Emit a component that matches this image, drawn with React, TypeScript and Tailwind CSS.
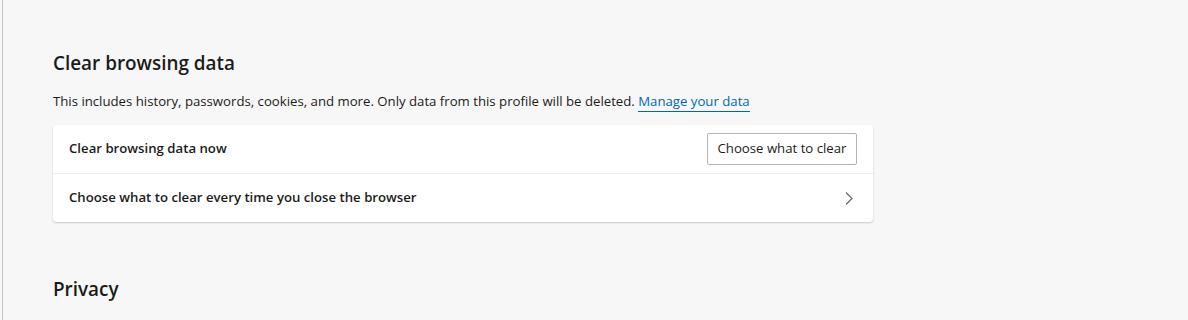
const font = { fontFamily: '"Segoe UI", "Open Sans", sans-serif' };

export default function App() {
  return (
    <div
      className="flex h-[320px] w-[1188px] overflow-hidden bg-[#f7f7f7] text-[#1b1b1b]"
      style={font}
    >
      <div className="w-[2px] shrink-0" />
      <div className="w-px shrink-0 bg-[#c4c4c4]" />
      <div className="flex w-[870px] flex-col pl-[50px] pt-[50px]">
        <h2 className="text-[18.9px] font-semibold leading-[26px]">Clear browsing data</h2>
        <p className="mt-[15px] text-[13.2px] leading-[20px]">
          This includes history, passwords, cookies, and more. Only data from this profile will be
          deleted.{" "}
          <a href="#" className="border-b border-[#0067b8] pb-[1px] text-[#0067b8]">
            Manage your data
          </a>
        </p>
        <div className="mt-[14px] w-[820px] rounded-[4px] bg-white shadow-[0_1px_2px_rgba(0,0,0,0.2)]">
          <div className="flex h-[48px] items-center justify-between pl-[16px] pr-[16px]">
            <span className="text-[13.2px] font-semibold">Clear browsing data now</span>
            <button className="h-[32px] w-[150px] rounded-[2px] border border-[#b3b3b3] bg-white text-[13.2px]">
              Choose what to clear
            </button>
          </div>
          <div className="h-px bg-[#ebebeb]" />
          <div className="flex h-[48px] items-center justify-between pl-[16px] pr-[20px]">
            <span className="text-[13.2px] font-semibold">
              Choose what to clear every time you close the browser
            </span>
            <svg width="8" height="13" viewBox="0 0 8 13" fill="none">
              <path d="M1 0.5 L7 6.5 L1 12.5" stroke="#616161" strokeWidth="1.1" />
            </svg>
          </div>
        </div>
        <h2 className="mt-[54px] text-[18.9px] font-semibold leading-[26px]">Privacy</h2>
      </div>
    </div>
  );
}
